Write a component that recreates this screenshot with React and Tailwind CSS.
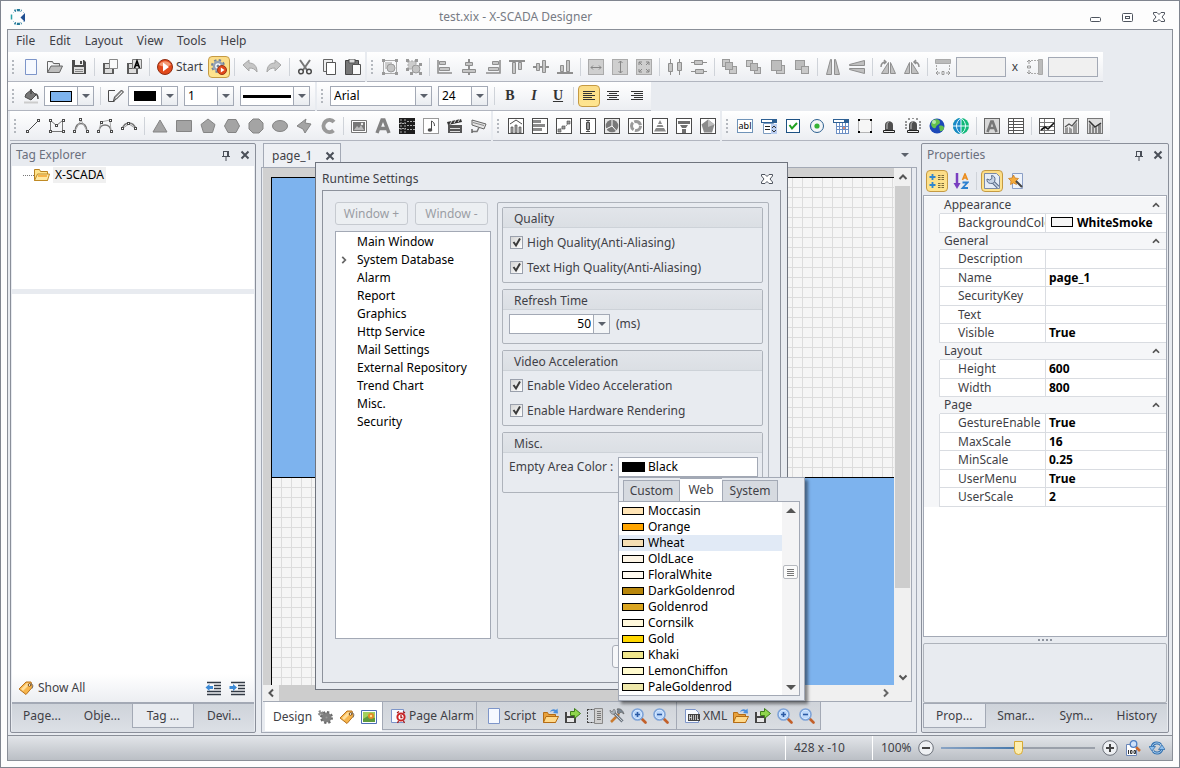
import React, { useState } from "react";

const DARK = "#4b4b4b";
const GRAY = "#8f8f8f";

// Small square handles used by the drawing tools
const Dots = ({ at }) =>
    at.map(([x, y]) => (
        <g key={`${x}-${y}`} shapeRendering="crispEdges">
            <rect x={x - 1} y={y - 1} width="3" height="3" fill={DARK} />
            <rect x={x} y={y} width="1" height="1" fill="#fff" />
        </g>
    ));

const Framed = ({ children, fill = "#fff", stroke = DARK }) => (
    <>
        <rect x=".5" y=".5" width="15" height="15" fill={fill} stroke={stroke} />
        {children}
    </>
);

const Floppy = ({ color = DARK }) => (
    <>
        <path d="M1 1h12l2 2v12H1z" fill={color} />
        <path d="M4 1h8v5H4z" fill="#f2f2f2" />
        <path d="M9 2h2v3H9z" fill={color} />
        <path d="M3 8h10v6H3z" fill="#ddd" />
        <path d="M4 10.500h8M4 12.500h8" stroke="#888" />
    </>
);

const Lens = ({ sign }) => (
    <>
        <path d="M10.500 10.500l4 4" stroke="#c2602a" strokeWidth="2.6" strokeLinecap="round" />
        <circle cx="6.5" cy="6.5" r="5.500" fill="#e4f0ff" stroke="#7da3d8" strokeWidth="1.600" />
        <circle cx="6.5" cy="6.5" r="4" fill="#bcd8fb" />
        <path d={sign === "+" ? "M4 6.500h5M6.500 4v5" : "M4 6.500h5"} stroke="#2c5ba5" strokeWidth="1.600" />
    </>
);

const FolderArrow = () => (
    <>
        <path d="M.500 4.500h4l1 2h7v8H.500z" fill="#e9a13b" stroke="#b46c14" />
        <path d="M3 8.500h12.500l-3 6H.500z" fill="#ffd98a" stroke="#b46c14" />
        <path d="M7 4c1-3 4-3.500 6-2l1.500-1.500.500 5-5-.500 1.500-1.500C10 2.500 8.500 3 7 4z" fill="#4b8fdc" />
    </>
);

const SaveArrow = () => (
    <>
        <path d="M0 4h11v11H0z" fill="#444" />
        <path d="M2 4h6v4H2zM2 10h7v4H2z" fill="#e6e6e6" />
        <path d="M5.500 3.500h4V.500l6 5-6 5V7.500h-4z" fill="#8fd64c" stroke="#3f7f1a" />
    </>
);

const Tag = () => (
    <>
        <path d="M1 9l7-7h5l1.500 5L8 14.500z" fill="#f7b54c" stroke="#b8721d" />
        <path d="M3 9l6-6 3 1-7 7z" fill="#ffdf9c" />
        <circle cx="11.500" cy="5" r="1.300" fill="#fff" stroke="#7a4a12" />
        <path d="M12 4.500c2-2 4 1 2 4" fill="none" stroke="#777" />
    </>
);

const Chip = ({ x, y, s = 7, c = "#c9c9c9" }) => (
    <rect x={x + 0.5} y={y + 0.5} width={s} height={s} fill={c} stroke="#999" />
);

const Bell = () => (
    <>
        <path d="M4 12V7c0-5 8-5 8 0v5z" fill="#4e4e4e" />
        <path d="M6 11V7c0-2 1-3 2-3" fill="none" stroke="#c4c4c4" />
        <path d="M2.500 12.500h11v2h-11z" fill="#eee" stroke="#222" />
    </>
);

const ICONS = {
    logo: (
        <>
            <path d="M4.500 2A7 7 0 0 1 11.500 2M4.500 14A7 7 0 0 0 11.500 14" fill="none" stroke="#247a99" strokeWidth="2.400" strokeDasharray="1.500 1 3 1 2" />
            <path d="M1.500 5.500v5" fill="none" stroke="#2ba3a8" strokeWidth="1.500" />
            <path d="M15 4v9l-4.500-4.500z" fill="#204f92" />
            <path d="M3 4l1-1M3 12l1 1M13 3l1 1M13 13l1-1" stroke="#a9cadc" />
        </>
    ),
    page: <path d="M2.500.500h11v15h-11z" fill="#f6f9ff" stroke="#7d95c9" />,
    open: (
        <>
            <path d="M.500 2.500h5l1 2h6v3" fill="#ddd" stroke="#666" />
            <path d="M.500 13.500V2.500M.500 13.500h12l3-6.500H4z" fill="#bdbdbd" stroke="#666" />
        </>
    ),
    save: <Floppy />,
    saveAll: (
        <>
            <path d="M1 4h11v11H1z" fill="#5a5a5a" />
            <path d="M3 5h4v4H3zM3 10h7v4H3z" fill="#ddd" />
            <path d="M7.500.500h8v9h-8z" fill="#fafafa" stroke="#888" />
        </>
    ),
    saveAs: (
        <>
            <path d="M1 4h11v11H1z" fill="#5a5a5a" />
            <path d="M3 5h3v4H3zM3 10h7v4H3z" fill="#ddd" />
            <path d="M6.500.500h9v9h-9z" fill="#ddd" stroke="#777" />
            <path d="M8.500 9l2.500-7 2.500 7M9.500 6.500h3" fill="none" stroke="#000" strokeWidth="1.600" />
        </>
    ),
    play: (
        <>
            <circle cx="8" cy="8" r="7.500" fill="#e2491b" stroke="#8f2d13" />
            <path d="M2 6c2-5 10-5 12 0-4 2-8 2-12 0z" fill="#f49a74" />
            <path d="M6 3.500l6 4.500-6 4.500z" fill="#fff" />
        </>
    ),
    gear: (
        <>
            <circle cx="7" cy="7" r="6" fill="none" stroke="#72829a" strokeWidth="2" strokeDasharray="2.400 2.310" />
            <circle cx="7" cy="7" r="4" fill="#fff" stroke="#93a1b5" strokeWidth="2.400" />
            <circle cx="7" cy="7" r="1.500" fill="#72829a" />
            <circle cx="11" cy="11" r="4.500" fill="#e2491b" stroke="#9b3418" />
            <path d="M9.800 8.500l3.700 2.500-3.700 2.500z" fill="#fff" />
        </>
    ),
    undo: <path d="M1 6l6-5v3c5 0 8 3 8 9-2-3-4-4-8-4v3z" fill="#c6c6c6" stroke="#a6a6a6" />,
    redo: <path d="M15 6L9 1v3C4 4 1 7 1 13c2-3 4-4 8-4v3z" fill="#c6c6c6" stroke="#a6a6a6" />,
    cut: (
        <>
            <path d="M3 1l7 10M13 1L6 11" stroke="#777" strokeWidth="2" />
            <circle cx="4" cy="12.500" r="2.300" fill="none" stroke={DARK} strokeWidth="1.500" />
            <circle cx="12" cy="12.500" r="2.300" fill="none" stroke={DARK} strokeWidth="1.500" />
        </>
    ),
    copy: (
        <>
            <path d="M2.500.500h9v12h-9z" fill="#eee" stroke="#666" />
            <path d="M5.500 3.500h9v12h-9z" fill="#fff" stroke="#555" />
        </>
    ),
    paste: (
        <>
            <path d="M.500 1.500h13v14H.500z" fill="#777" stroke="#444" />
            <path d="M4 0h6v4H4z" fill="#ddd" stroke="#555" />
            <path d="M7.500 5.500h8v10h-8z" fill="#fafafa" stroke="#555" />
        </>
    ),
    group: (
        <>
            <path d="M1.500 1.500h13v13h-13z" fill="none" stroke="#aaa" />
            <path d="M3 3h7v7H3z" fill="#ccc" />
            <circle cx="9" cy="9" r="4" fill="#c4c4c4" stroke="#999" />
            <path d="M0 0h3v3H0zM13 0h3v3h-3zM0 13h3v3H0zM13 13h3v3h-3z" fill="#999" />
        </>
    ),
    ungroup: (
        <>
            <path d="M2 2h8v8H2z" fill="#ccc" stroke="#aaa" strokeDasharray="2 1" />
            <circle cx="10" cy="10" r="4" fill="#c4c4c4" stroke="#999" />
            <path d="M0 0h3v3H0zM9 0h3v3H9zM0 9h3v3H0zM13 4h3v3h-3zM4 13h3v3H4zM13 13h3v3h-3z" fill="#999" />
        </>
    ),
    alignLeft: (
        <>
            <path d="M1 1v13h14" fill="none" stroke={GRAY} strokeWidth="1.600" />
            <path d="M2.500 2.500h6v3h-6zM2.500 8.500h10v3h-10z" fill="#c6c6c6" stroke={GRAY} />
        </>
    ),
    alignCenter: (
        <>
            <path d="M8 0v16" stroke={GRAY} strokeWidth="2" />
            <path d="M4.500 3.500h7v3h-7zM1.500 10.500h13v3h-13z" fill="#c6c6c6" stroke={GRAY} />
        </>
    ),
    alignRight: (
        <>
            <path d="M15 1v13H1" fill="none" stroke={GRAY} strokeWidth="1.600" />
            <path d="M7.500 2.500h6v3h-6zM3.500 8.500h10v3h-10z" fill="#c6c6c6" stroke={GRAY} />
        </>
    ),
    alignTop: (
        <>
            <path d="M0 2h16" stroke={GRAY} strokeWidth="2" />
            <path d="M3.500 3.500h3v11h-3zM9.500 3.500h3v7h-3z" fill="#c6c6c6" stroke={GRAY} />
        </>
    ),
    alignMiddle: (
        <>
            <path d="M0 8h16" stroke={GRAY} strokeWidth="2" />
            <path d="M3.500 4.500h3v7h-3zM9.500 1.500h3v12h-3z" fill="#c6c6c6" stroke={GRAY} />
        </>
    ),
    alignBottom: (
        <>
            <path d="M0 14h16" stroke={GRAY} strokeWidth="2" />
            <path d="M3.500 6.500h3v6h-3zM9.500 1.500h3v11h-3z" fill="#c6c6c6" stroke={GRAY} />
        </>
    ),
    sameWidth: (
        <Framed fill="#cfcfcf" stroke="#aaa">
            <path d="M3 8.500h10M5 6.500l-2 2 2 2M11 6.500l2 2-2 2" fill="none" stroke="#858585" />
        </Framed>
    ),
    sameHeight: (
        <Framed fill="#cfcfcf" stroke="#aaa">
            <path d="M8.500 2v12M6.500 4l2-2 2 2M6.500 12l2 2 2-2" fill="none" stroke="#858585" />
        </Framed>
    ),
    sameSize: (
        <Framed fill="#cfcfcf" stroke="#aaa">
            <path d="M3 6V3h3M10 3h3v3M3 10v3h3M13 10v3h-3M3 3l3 3M13 3l-3 3M3 13l3-3M13 13l-3-3" fill="none" stroke="#858585" />
        </Framed>
    ),
    spaceH: (
        <>
            <path d="M3.500 0v16M12.500 0v16" stroke={GRAY} />
            <path d="M1.500 4.500h4v8h-4zM10.500 3.500h4v8h-4z" fill="#c6c6c6" stroke={GRAY} />
        </>
    ),
    spaceV: (
        <>
            <path d="M0 3.500h16M0 12.500h16" stroke={GRAY} />
            <path d="M3.500 1.500h8v4h-8zM4.500 10.500h8v4h-8z" fill="#c6c6c6" stroke={GRAY} />
        </>
    ),
    front: (<><Chip x={0} y={0} /><Chip x={7} y={7} /><Chip x={3} y={3} c="#bdbdbd" /></>),
    forward: (<><Chip x={0} y={1} s={6} /><Chip x={8} y={8} s={6} /><Chip x={4} y={4} s={7} c="#bdbdbd" /></>),
    backward: (<><Chip x={6} y={6} s={8} /><Chip x={1} y={1} s={10} c="#bdbdbd" /></>),
    back: (<><Chip x={1} y={1} s={9} c="#bdbdbd" /><Chip x={7} y={7} /></>),
    flipH: <path d="M5.500.500h1v15H1.500zM9.500.500h1l4 15h-5z" fill="#c0c0c0" stroke={GRAY} />,
    flipV: <path d="M15.500 1.500v5H.500v-1zM15.500 14.500v-5H.500v1z" fill="#c0c0c0" stroke={GRAY} />,
    rotateL: (
        <>
            <path d="M8.500 3.500v11h-7zM10.500 3.500l5 11h-5z" fill="#c0c0c0" stroke={GRAY} />
            <path d="M1 8c0-4 2-5 5-5M4 1l2 2-2 2" fill="none" stroke={GRAY} strokeWidth="1.500" />
        </>
    ),
    rotateR: (
        <>
            <path d="M5.500 3.500v11h-5zM7.500 3.500l7 11h-7z" fill="#c0c0c0" stroke={GRAY} />
            <path d="M15 8c0-4-2-5-5-5M12 1l-2 2 2 2" fill="none" stroke={GRAY} strokeWidth="1.500" />
        </>
    ),
    pageWidth: (
        <>
            <path d="M.500.500h15v4H.500z" fill="#bbb" stroke="#aaa" />
            <path d="M1.500 6v6M14.500 6v6" stroke="#aaa" strokeDasharray="2 1" />
            <path d="M1 14h4M11 14h4M3 12l-2 2 2 2M13 12l2 2-2 2M7 12.500h2v3H7z" fill="none" stroke="#999" />
        </>
    ),
    pageHeight: (
        <>
            <path d="M11.500.500h4v15h-4z" fill="#bbb" stroke="#aaa" />
            <path d="M4 1.500h7M4 14.500h7" stroke="#aaa" strokeDasharray="2 1" />
            <path d="M2 1v4M2 11v4M0 3l2-2 2 2M0 13l2 2 2-2M.500 7h3v2H.500z" fill="none" stroke="#999" />
        </>
    ),
    bucket: (
        <>
            <path d="M3 6l5-4 5 5-5 5-6-3z" fill="#777" stroke={DARK} />
            <path d="M8 1v5M12 6c3 0 3 3 3 5" fill="none" stroke={DARK} strokeWidth="1.500" />
            <path d="M1 14.500h14" stroke="#ccc" strokeWidth="2" />
        </>
    ),
    pencil: (
        <>
            <path d="M7 2.500H.500v11h6" fill="none" stroke={DARK} />
            <path d="M5.500 13l1-4 7-7 2 2-7 7z" fill="#aaa" stroke={DARK} />
            <path d="M8 10l6-6" stroke="#eee" />
        </>
    ),
    left: <path d="M2 3.500h12M2 5.500h9M2 7.500h12M2 9.500h9M2 11.500h12" stroke="#333" />,
    center: <path d="M2 3.500h12M4 5.500h8M2 7.500h12M4 9.500h8M2 11.500h12" stroke="#333" />,
    right: <path d="M2 3.500h12M5 5.500h9M2 7.500h12M5 9.500h9M2 11.500h12" stroke="#333" />,
    line: (<><path d="M2 14L14 2" stroke={DARK} /><Dots at={[[2, 13], [13, 2]]} /></>),
    polyline: (<><path d="M1.500 13.500v-11l6 5 6-5v11z" fill="none" stroke="#777" /><Dots at={[[1, 2], [7, 7], [14, 2], [1, 13], [14, 13]]} /></>),
    bezier: (<><path d="M2 13C3 3 13 3 14 13" fill="none" stroke="#777" strokeWidth="1.400" /><path d="M2 13L8 2l6 11" fill="none" stroke="#aaa" /><Dots at={[[7, 1], [1, 13], [14, 13]]} /></>),
    curve: (<><path d="M2 13C3 5 13 5 14 13" fill="none" stroke="#777" strokeWidth="1.400" /><path d="M2 13l2-9 9-2 1 11" fill="none" stroke="#aaa" /><Dots at={[[4, 4], [13, 2], [1, 13], [14, 13]]} /></>),
    arc: (<><path d="M1 11C4 3 12 3 15 11" fill="none" stroke="#777" strokeWidth="1.400" /><path d="M2 10l6-4 6 4" fill="none" stroke="#999" /><Dots at={[[1, 10], [7, 5], [14, 10]]} /></>),
    triangle: <path d="M8 2l7 12H1z" fill="#a4a4a4" stroke="#848484" />,
    rect: <path d="M.500 2.500h15v11H.500z" fill="#a4a4a4" stroke="#848484" />,
    pentagon: <path d="M8 1l7 5.500-2.500 8h-9L1 6.500z" fill="#a4a4a4" stroke="#848484" />,
    hexagon: <path d="M4 1.500h8l3.500 6.500-3.500 6.500H4L.500 8z" fill="#a4a4a4" stroke="#848484" />,
    octagon: <path d="M5 1h6l4 4v6l-4 4H5l-4-4V5z" fill="#a4a4a4" stroke="#848484" />,
    ellipse: <ellipse cx="8" cy="8" rx="7.500" ry="5.500" fill="#a4a4a4" stroke="#848484" />,
    poly: <path d="M1 8l9-7-1 4 6 1-6 9-2-4z" fill="#a4a4a4" stroke="#848484" />,
    arcShape: <path d="M14 4A6 6 0 1 0 13.500 12.500" fill="none" stroke="#999" strokeWidth="4" />,
    picture: (
        <>
            <path d="M.500 2.500h15v12H.500z" fill="#fff" stroke="#777" />
            <path d="M2 4h12v9H2z" fill="#777" />
            <path d="M3 12l3-4 2 2 2-3 3 5z" fill="#bbb" />
            <circle cx="11" cy="6" r="1.200" fill="#eee" />
        </>
    ),
    letterA: <path d="M2 15L7 2h2l5 13M4 10.500h8" fill="none" stroke="#828282" strokeWidth="3.400" />,
    qr: (
        <>
            <path d="M0 0h16v16H0z" fill="#1d1d1d" />
            <path d="M2 1v14M6 1v14M8 3.500h8M8 7.500h8M8 11.500h8M0 5.500h7M0 10.500h7" stroke="#aaa" strokeDasharray="2 1" />
        </>
    ),
    sound: (
        <Framed stroke="#999">
            <path d="M8.500 12V3c2 1 3 2 3 5" fill="none" stroke={DARK} />
            <ellipse cx="7" cy="12" rx="2.300" ry="1.700" fill={DARK} />
        </Framed>
    ),
    clapper: (
        <>
            <path d="M1 7h14v8H1z" fill="#555" />
            <path d="M0 4l14-3 1 3L1 7z" fill="#333" />
            <path d="M3 6l2-3M7 5l2-3M11 4l2-3M3 10.500h10M3 13.500h10" stroke="#ddd" />
        </>
    ),
    camera: (
        <>
            <path d="M1 2l14 4-2 5L1 7z" fill="#e5e5e5" stroke="#666" />
            <path d="M2 4.500l11 3" stroke="#888" />
            <path d="M1 13.500h5l2-4" fill="none" stroke="#777" strokeWidth="1.500" />
            <path d="M1 11v4" stroke="#666" strokeWidth="1.500" />
        </>
    ),
    chartBar: (
        <Framed>
            <path d="M2 6l6-4 6 4" fill="none" stroke={DARK} />
            <path d="M3 9h2v6H3zM7 7h2v8H7zM11 9h2v6h-2z" fill="#aaa" stroke={DARK} strokeWidth=".7" />
        </Framed>
    ),
    chartH: <Framed><path d="M1 3.500h8M1 7.500h12M1 11.500h9" stroke="#8a8a8a" strokeWidth="3" /></Framed>,
    scatter: <Framed><path d="M3 12l4-3 3-1 3-4" fill="none" stroke={DARK} strokeDasharray="1 1" /><path d="M2 11h3v3H2zM6 8h3v3H6zM11 3h3v3h-3z" fill="#999" stroke={DARK} strokeWidth=".6" /></Framed>,
    candle: <Framed><path d="M8 2v12M6 2.500h4M6 13.500h4" stroke={DARK} /><path d="M6.500 4.500h3v7h-3z" fill="#999" stroke={DARK} /></Framed>,
    pie: <Framed fill="#e9e9e9"><circle cx="8" cy="8" r="6.300" fill="#787878" /><path d="M8 1.500V8l4.500 5M8 8l-6 3" stroke="#fff" fill="none" /></Framed>,
    donut: <Framed><circle cx="8" cy="8" r="4.500" fill="none" stroke="#999" strokeWidth="3" strokeDasharray="8 1.400" /></Framed>,
    pyramid: <Framed><path d="M8 2l2 4H6zM5.500 7h5l1 2h-7zM4 10h8l2 3.500H2z" fill="#8a8a8a" /></Framed>,
    funnel: <Framed><path d="M2 3h12v3H2zM4 7h8l-2 3H6zM6 11h4v4H6z" fill="#6f6f6f" /></Framed>,
    radar: <Framed><path d="M8 1.500l6.500 5-2.500 8H4l-2.500-8z" fill="#8b8b8b" /><path d="M8 1.500l6.500 5L8 9z" fill="#bdbdbd" /></Framed>,
    combo: (
        <>
            <path d="M0 1h16v4H0z" fill="#2d5f93" />
            <path d="M1 2h10v2H1z" fill="#fff" />
            <path d="M2.500 5.500h10v10h-10z" fill="#fff" stroke="#7c9cc0" />
            <path d="M4 8.500h5M4 11.500h5" stroke="#222" />
            <path d="M10 6h6v10h-6z" fill="#b9cdf0" />
            <path d="M11 10l2-2 2 2M11 12l2 2 2-2" stroke="#333" fill="none" />
        </>
    ),
    check: <><rect x="1.500" y="1.500" width="13" height="13" fill="#fff" stroke="#1d5183" /><path d="M4.500 7l2.500 3.500 5-5.500" fill="none" stroke="#21a121" strokeWidth="2" /></>,
    radio: <><circle cx="8" cy="8" r="6.500" fill="#f4f6f8" stroke="#2c6090" /><circle cx="8" cy="8" r="2.600" fill="#36b336" /></>,
    calendar: (
        <>
            <path d="M0 1h16v4H0z" fill="#2d5f93" />
            <path d="M1 2h10v2H1z" fill="#fff" />
            <path d="M3 5h12v10H3z" fill="#fff" />
            <path d="M3.500 5v10.500M6.500 5v10M9.500 5v10M12.500 5v10M15.500 5v10M3 8.500h13M3 11.500h13M3 15.500h13" stroke="#6c8fc4" />
            <path d="M10 9h2v2h-2z" fill="#e98a6a" />
        </>
    ),
    panel: (
        <>
            <rect x="1.500" y="1.500" width="13" height="13" fill="#f6f6f6" stroke="#777" strokeDasharray="1 1" />
            <path d="M1 1h2v2H1zM13 1h2v2h-2zM1 13h2v2H1zM13 13h2v2h-2z" fill="#000" />
        </>
    ),
    bell: <Bell />,
    bellRing: (
        <>
            <Bell />
            <path d="M3 1h2M7 0h2M11 1h2M0 4h2M14 4h2M0 7h2M14 7h2M0 10h2M14 10h2" stroke="#333" strokeWidth="1.200" />
        </>
    ),
    earth: (
        <>
            <circle cx="8" cy="8" r="7.500" fill="#1c48b8" />
            <path d="M3 3c3-3 8-2 8 1s-3 2-4 5-5 0-5-3zM10 8c3-1 5 0 5 2s-3 4-4 3z" fill="#63c04c" />
            <circle cx="5" cy="4" r="2" fill="#c9f0c4" opacity=".8" />
        </>
    ),
    globe: (
        <>
            <circle cx="8" cy="8" r="8" fill="#10b878" />
            <path d="M8 0a8 8 0 0 0 0 16z" fill="#1887c9" />
            <path d="M8 0v16M0 8h16M8 0C2 4 2 12 8 16M8 0c6 4 6 12 0 16" fill="none" stroke="#e8fbff" />
        </>
    ),
    textBox: <Framed fill="#d8d8d8" stroke="#666"><path d="M3.500 14L7.300 3.500h1.400l3.800 10.500M5 10h6" fill="none" stroke="#777" strokeWidth="2.600" /></Framed>,
    table: <Framed stroke="#555"><path d="M1 3.500h14M1 6.500h14M1 9.500h14M1 12.500h14M5.500 1v14" stroke="#555" /></Framed>,
    trendGrid: <Framed stroke="#555"><path d="M1 4.500h14M1 8.500h14M1 12.500h14M5.500 1v14" stroke="#777" /><path d="M2 12l4-3 3 2 6-6" fill="none" stroke="#111" strokeWidth="1.600" /></Framed>,
    trend: <Framed fill="#ececec" stroke="#777"><path d="M2 15V10l3-1v6zM6 15V9l3 2v4zM10 15V8l4-4v11z" fill="#999" /><path d="M2 9l4-3 3 2 5-6" fill="none" stroke="#555" strokeWidth="1.300" /></Framed>,
    trendDown: <Framed fill="#ddd" stroke="#777"><path d="M2 5l2 2v8H2zM5 8l2 1v6H5zM8 10l2-1v6H8zM11 7l3-1v9h-3z" fill="#888" /><path d="M2 3l6 6 6-4" fill="none" stroke="#333" strokeWidth="1.500" /></Framed>,
    folder: (
        <>
            <path d="M.500 2.500h5l1 2h7v9H.500z" fill="#ffe48c" stroke="#b9821f" />
            <path d="M.500 13.500l3-6.500h12l-2 6.500z" fill="#ffe9a3" stroke="#c08a25" />
            <path d="M4 9h9" stroke="#f7b54a" strokeWidth="2" />
        </>
    ),
    tag: <Tag />,
    outdent: (
        <>
            <path d="M2 2.500h14M9 5.500h7M9 8.500h7M2 11.500h14M2 14.500h14" stroke="#333b46" strokeWidth="1.300" />
            <path d="M.500 7.500l4-3.500v2h3.500v3H4.500v2z" fill="#3c8ad6" />
        </>
    ),
    indent: (
        <>
            <path d="M2 2.500h14M9 5.500h7M9 8.500h7M2 11.500h14M2 14.500h14" stroke="#333b46" strokeWidth="1.300" />
            <path d="M8 7.500L4 4v2H.500v3H4v2z" fill="#3c8ad6" />
        </>
    ),
    gearGray: (
        <>
            <circle cx="9.500" cy="8.500" r="3" fill="#999" stroke="#808080" strokeWidth="4" />
            <circle cx="9.500" cy="8.500" r="5.500" fill="none" stroke="#6b6b6b" strokeWidth="2" strokeDasharray="2.300 2" />
            <circle cx="3.500" cy="4" r="1.500" fill="#999" stroke="#888" strokeDasharray="1.500 1" strokeWidth="2.500" />
        </>
    ),
    image: (
        <>
            <path d="M.500 1.500h15v13H.500z" fill="#fff" stroke="#4e6fb5" />
            <path d="M2 3h12v10H2z" fill="#a3cf5c" />
            <path d="M2 10l5-3 7 2v4H2z" fill="#5f9b3c" />
            <circle cx="10" cy="7" r="3" fill="#e28a28" />
            <circle cx="10" cy="7" r="1.200" fill="#ffe28a" />
        </>
    ),
    alarm: (
        <>
            <path d="M.500 1.500h12v13H.500z" fill="#f8fbff" stroke="#7d95c9" />
            <circle cx="10" cy="9" r="3.600" fill="#fff" stroke="#cc2424" strokeWidth="2" />
            <path d="M10 7v2.500h1.500M6 5l2-1.500M14 5l-2-1.500M7.500 13l-1 2M12.500 13l1 2" stroke="#a51818" strokeWidth="1.300" fill="none" />
        </>
    ),
    folderArrow: <FolderArrow />,
    saveArrow: <SaveArrow />,
    snippet: (
        <>
            <path d="M.500 1v14M.500 1.500h8M.500 14.500h8" stroke="#444" strokeDasharray="2 1" fill="none" />
            <path d="M7.500.500h8v15h-8z" fill="#cfcfcf" stroke="#888" />
            <path d="M10 3.500h4M10 5.500h4M10 7.500h4M10 9.500h4M10 11.500h4" stroke="#777" />
        </>
    ),
    tools: (
        <>
            <path d="M2 14l8-8" stroke="#c97b2f" strokeWidth="2.500" />
            <path d="M5 5l8.500 8.500" stroke="#6e7780" strokeWidth="3" />
            <path d="M5 5l8.500 8.500" stroke="#c9d0d6" />
            <path d="M8 1c3-1 6 1 7 5l-3-2-2 2-2-2 1-1z" fill="#7b8792" stroke="#555" strokeWidth=".6" />
            <path d="M1 2l2 2 2-3c2 2 2 4 0 5S1 5 1 2z" fill="#aab3bb" stroke="#666" strokeWidth=".6" />
        </>
    ),
    zoomIn: <Lens sign="+" />,
    zoomOut: <Lens sign="-" />,
    xml: (
        <>
            <path d="M.500 1.500h10l3 3v10H.500z" fill="#f8fbff" stroke="#7d95c9" />
            <path d="M3 6h12v7H3z" fill="#444" />
            <path d="M4.500 7v5M6.500 7v5M8.500 7v5M10.500 7v5M12.500 7v5M12 11.500h2M4 9.500h3" stroke="#ddd" strokeWidth=".8" />
        </>
    ),
    categorized: (
        <>
            <path d="M3.500 1v6M.500 4h6M3.500 9v6M.500 12h6" stroke="#2e86d0" strokeWidth="1.800" />
            <path d="M9 2.500h6M9 4.500h6M9 6.500h6M9 10.500h6M9 12.500h6M9 14.500h6" stroke="#7a6a3a" strokeDasharray="2.500 1" />
        </>
    ),
    sort: (
        <>
            <path d="M4 0v11" stroke="#7a3fc0" strokeWidth="2.500" />
            <path d="M.500 10h7L4 16z" fill="#7a3fc0" />
            <path d="M9.500 7L12 1l2.500 6M10.500 5h3" fill="none" stroke="#ea8b1a" strokeWidth="1.600" />
            <path d="M9.500 9.500h5l-5 5.500h5.500" fill="none" stroke="#2a7fd0" strokeWidth="1.800" />
        </>
    ),
    wrench: (
        <>
            <path d="M.500.500h12l3 3v12H.500z" fill="#e6edf7" stroke="#7d8ba6" />
            <path d="M8.500 8.500L14 14" stroke="#5a6c88" strokeWidth="3.600" />
            <path d="M8.500 8.500L14 14" stroke="#c8d4e6" strokeWidth="1.400" />
            <path d="M3 6a4 4 0 1 0 4.500-3.500L8 5.500 5.500 7z" fill="#c8d4e6" stroke="#5a6c88" />
        </>
    ),
    wizard: (
        <>
            <path d="M4.500.500h10v15h-10z" fill="#eef3fb" stroke="#8b9fc6" />
            <path d="M5.500 2L7 5l3.500.500L8 8l.500 3.500-3-1.500-3 1.500L3 8 .500 5.500 4 5z" fill="#f5ab3c" stroke="#c57718" strokeWidth=".7" />
            <path d="M8 8l6 6" stroke="#444" strokeWidth="2" />
        </>
    ),
    zoom100: (
        <>
            <path d="M1.500 4.500h10v11h-10z" fill="#fff" stroke="#6b86b8" />
            <path d="M3.500 10v4M5.500 10.500h1.500v3H5.500zM9 10.500h1.500v3H9z" fill="none" stroke="#333" />
            <path d="M11 7l4 4" stroke="#cf6b2d" strokeWidth="2.500" />
            <circle cx="8.500" cy="4" r="3.300" fill="#cfe2fb" stroke="#4d7fc4" strokeWidth="1.300" />
        </>
    ),
    refresh: (
        <>
            <path d="M3 7C4 2 10 2 12 5M13 9c-1 5-7 5-9 2" fill="none" stroke="#3572b0" strokeWidth="3" />
            <path d="M3 7C4 2 10 2 12 5M13 9c-1 5-7 5-9 2" fill="none" stroke="#a9cff0" />
            <path d="M0 6.500h6.500L3 11zM9.500 9.500H16L13 5z" fill="#8fc0ee" stroke="#3572b0" strokeWidth=".8" />
        </>
    ),
    pin: <path d="M5.500 4v5M10.500 4v5M5 4.500h6M9.500 4v5M4 9.500h8M8 10v4" stroke="#4a4f58" fill="none" />,
    cross: <path d="M4.500 4.500l7 7M11.500 4.500l-7 7" stroke="#4a4f58" strokeWidth="2" />,
    hollowCross: (
        <path
            d="M2.500 3.500h3.500l2 2 2-2h3.500v1.500L11 8l2.500 3v1.500H10l-2-2-2 2H2.500V11L5 8 2.500 5z"
            fill="#fff"
            stroke="#4f555f"
        />
    ),
    minimize: <rect x="3.500" y="8.500" width="10" height="4" rx="1" fill="#fff" stroke="#4f555f" />,
    maximize: (
        <>
            <rect x="3.500" y="4.500" width="10" height="8" rx="1" fill="#fff" stroke="#4f555f" />
            <rect x="6.500" y="7.500" width="4" height="2" fill="#fff" stroke="#4f555f" />
        </>
    ),
    caret: <path d="M4 6h8l-4 4z" fill="#5b616b" />,
    caretUp: <path d="M3 11h10L8 6z" fill="#555" />,
    caretDown: <path d="M3 6h10l-5 5z" fill="#555" />,
    chevUp: <path d="M4.500 10L8 6.500 11.500 10" fill="none" stroke="#555" strokeWidth="2" />,
    chevDown: <path d="M4.500 6.500L8 10l3.500-3.500" fill="none" stroke="#555" strokeWidth="2" />,
    chevLeft: <path d="M10 4.500L6.500 8l3.500 3.500" fill="none" stroke="#555" strokeWidth="2" />,
    chevRight: <path d="M6 4.500L9.500 8 6 11.500" fill="none" stroke="#666" strokeWidth="2" />,
    minus: (
        <>
            <circle cx="8" cy="8" r="7.300" fill="#eef0f3" stroke="#6b7079" />
            <path d="M4 8h8" stroke="#444" strokeWidth="2" />
        </>
    ),
    plus: (
        <>
            <circle cx="8" cy="8" r="7.300" fill="#eef0f3" stroke="#6b7079" />
            <path d="M4 8h8M8 4v8" stroke="#444" strokeWidth="2" />
        </>
    ),
};

function Icon({ name, className = "h-4 w-4" }) {
    return (
        <svg viewBox="0 0 16 16" className={`shrink-0 ${className}`} aria-hidden="true">
            {ICONS[name]}
        </svg>
    );
}

function Tool({ name, active, children }) {
    return (
        <button
            aria-label={name}
            className={`mx-px flex h-[22px] w-[22px] shrink-0 items-center justify-center rounded-sm ${
                active ? "border border-[#c59a43] bg-linear-to-b from-[#fbdc87] to-[#ffe58f]" : ""
            }`}
        >
            {children || <Icon name={name} />}
        </button>
    );
}

// "|" in the list stands for a separator
function Tools({ names }) {
    return names.split(" ").map((name, i) => (name === "|" ? <Sep key={i} /> : <Tool key={i} name={name} />));
}

function TabTools({ names }) {
    return names.split(" ").map((name) => (
        <button key={name} aria-label={name} className="flex w-[22px] justify-center">
            <Icon name={name} />
        </button>
    ));
}

function Sep() {
    return (
        <div className="flex w-[7px] shrink-0 justify-center">
            <div className="h-[18px] w-px bg-[#cfd3d9]"></div>
        </div>
    );
}

function Bar({ children, className = "" }) {
    return (
        <div className={`flex items-center border-b border-[#b1b5bf] bg-linear-to-b from-white to-[#eceef2] ${className}`}>
            <div className="flex w-[11px] shrink-0 flex-col items-center gap-[2px] pr-[2px]">
                <i className="h-[2px] w-[2px] bg-[#b4b8be]"></i>
                <i className="h-[2px] w-[2px] bg-[#b4b8be]"></i>
                <i className="h-[2px] w-[2px] bg-[#b4b8be]"></i>
                <i className="h-[2px] w-[2px] bg-[#b4b8be]"></i>
            </div>
            {children}
        </div>
    );
}

function Combo({ label, value, className, children }) {
    return (
        <div className={`relative h-5 shrink-0 border border-[#a3a9b5] bg-white ${className}`}>
            <select
                aria-label={label}
                defaultValue={value}
                className={`block h-full w-full appearance-none bg-transparent pl-[3px] text-black outline-none ${children ? "opacity-0" : ""}`}
            >
                <option>{value}</option>
            </select>
            {children && <div className="pointer-events-none absolute inset-y-0 left-0 right-4 flex items-center justify-center">{children}</div>}
            <div className="pointer-events-none absolute inset-y-0 right-0 flex w-4 items-center justify-center border-l border-[#a3a9b5] bg-linear-to-b from-white to-[#e9ecf0]">
                <Icon name="caret" />
            </div>
        </div>
    );
}

function PanelTabs({ tabs, active }) {
    return (
        <div className="flex h-[29px] shrink-0 border-t border-[#a3a9b5] bg-linear-to-b from-[#ced3da] to-[#dce0e6]">
            {tabs.map((tab) => (
                <button
                    key={tab}
                    className={`h-6 flex-1 ${tab === active ? "border border-t-0 border-[#a3a9b5] bg-[#e8ebf0]" : ""}`}
                >
                    {tab}
                </button>
            ))}
        </div>
    );
}

function PanelHeader({ title }) {
    return (
        <div className="flex h-[22px] shrink-0 items-center pl-1 pr-px text-[#6a6f7d]">
            <h2 className="flex-1">{title}</h2>
            <button aria-label="Auto hide"><Icon name="pin" /></button>
            <button aria-label="Close" className="ml-[3px]"><Icon name="cross" /></button>
        </div>
    );
}

function GroupBox({ title, children }) {
    return (
        <fieldset className="rounded-[2px] border border-[#aeb3bb]">
            <h3 className="h-5 border-b border-[#cdd2d8] bg-linear-to-b from-[#e2e5ea] to-[#dbdfe4] pl-[11px] leading-[22px]">{title}</h3>
            {children}
        </fieldset>
    );
}

function Check({ label }) {
    const [on, setOn] = useState(true);
    return (
        <label className="flex h-[25px] items-center gap-1 pl-[7px]">
            <span className="relative h-[13px] w-[13px]">
                <input
                    type="checkbox"
                    checked={on}
                    onChange={() => setOn(!on)}
                    className="block h-[13px] w-[13px] appearance-none border border-[#9aa0ac] bg-linear-to-br from-[#d5d5d5] to-white"
                />
                {on && (
                    <svg viewBox="0 0 13 13" className="pointer-events-none absolute inset-0 h-[13px] w-[13px]">
                        <path d="M3.500 6l2.500 3.500 4-7" fill="none" stroke="#3a3a3a" strokeWidth="2" />
                    </svg>
                )}
            </span>
            {label}
        </label>
    );
}

const SETTINGS = [
    "Main Window", "System Database", "Alarm", "Report", "Graphics", "Http Service",
    "Mail Settings", "External Repository", "Trend Chart", "Misc.", "Security",
];

const COLORS = [
    ["Moccasin", "#ffe4b5"],
    ["Orange", "#ffa500"],
    ["Wheat", "#f5deb3"],
    ["OldLace", "#fdf5e6"],
    ["FloralWhite", "#fffaf0"],
    ["DarkGoldenrod", "#b8860b"],
    ["Goldenrod", "#daa520"],
    ["Cornsilk", "#fff8dc"],
    ["Gold", "#ffd700"],
    ["Khaki", "#f0e68c"],
    ["LemonChiffon", "#fffacd"],
    ["PaleGoldenrod", "#eee8aa"],
];

function ColorPopup() {
    return (
        <div className="absolute -left-px top-full mt-px w-[187px] border border-[#a3a9b5] bg-[#e8ebf0] pb-1 pr-1 shadow-[3px_3px_3px_rgba(0,0,0,0.45)]">
            <div className="flex h-[23px] items-end pl-1 text-[#3f3f46]">
                <button className="h-[21px] w-[57px] border border-b-0 border-[#a3a9b5] bg-[#d6dae0]">Custom</button>
                <button className="h-[23px] w-[42px] border-t border-[#a3a9b5] bg-white">Web</button>
                <button className="h-[21px] w-[56px] border border-b-0 border-[#a3a9b5] bg-[#d6dae0]">System</button>
            </div>
            <div className="flex border border-l-0 border-[#a3a9b5] bg-white">
                <ul className="flex-1 pt-px text-black">
                    {COLORS.map(([name, color]) => (
                        <li key={name} className={`flex h-4 items-center gap-1 pl-[3px] ${name === "Wheat" ? "bg-[#e1eaf6]" : ""}`}>
                            <span className="h-[8px] w-[22px] border border-black" style={{ background: color }}></span>
                            {name}
                        </li>
                    ))}
                </ul>
                <div className="flex w-[17px] flex-col items-center bg-[#f4f4f5]">
                    <Icon name="caretUp" />
                    <div className="mt-[47px] flex h-[14px] w-[15px] flex-col items-center justify-center gap-px rounded-[2px] border border-[#b5b8be] bg-[#fbfbfb]">
                        <i className="h-px w-[7px] bg-[#777]"></i>
                        <i className="h-px w-[7px] bg-[#777]"></i>
                        <i className="h-px w-[7px] bg-[#777]"></i>
                        <i className="h-px w-[7px] bg-[#777]"></i>
                    </div>
                    <Icon name="caretDown" className="mt-auto h-4 w-4" />
                </div>
            </div>
        </div>
    );
}

function RuntimeSettings() {
    return (
        <div role="dialog" aria-label="Runtime Settings" className="absolute left-[54px] top-[19px] z-10 w-[473px] border border-[#6f747e] bg-[#e8ebf0] px-[6px] pb-[6px]">
            <div className="flex h-[27px] items-center justify-between pr-[6px] pt-1">
                <h2>Runtime Settings</h2>
                <button aria-label="Close dialog"><Icon name="hollowCross" /></button>
            </div>
            <div className="border border-[#8d929c] pb-[14px] pl-3 pr-[11px] pt-[11px]">
                <div className="flex gap-[6px]">
                    <div className="w-[156px] shrink-0">
                        <div className="flex h-[23px] gap-[7px] text-[#9a9da4]">
                            <button className="w-[73px] rounded-[3px] border border-[#c6cad0] bg-[#eceff2]">Window +</button>
                            <button className="w-[73px] rounded-[3px] border border-[#c6cad0] bg-[#eceff2]">Window -</button>
                        </div>
                        <ul className="mt-[6px] h-[408px] border border-[#a3a9b5] bg-white pt-px leading-[18px] text-black">
                            {SETTINGS.map((item) => (
                                <li key={item} className="flex h-[18px] items-center">
                                    <span className="flex w-[21px] items-center">
                                        {item === "System Database" && <Icon name="chevRight" className="h-[14px] w-4" />}
                                    </span>
                                    {item}
                                </li>
                            ))}
                        </ul>
                    </div>
                    <div className="flex flex-1 flex-col gap-[6px] rounded-[2px] border border-[#aeb3bb] p-1 pr-[5px]">
                        <GroupBox title="Quality">
                            <div className="py-[2px]">
                                <Check label="High Quality(Anti-Aliasing)" />
                                <Check label="Text High Quality(Anti-Aliasing)" />
                            </div>
                        </GroupBox>
                        <GroupBox title="Refresh Time">
                            <div className="flex items-center gap-[6px] px-[6px] pb-[9px] pt-1">
                                <div className="flex h-5 w-[101px] border border-[#a3a9b5] bg-white">
                                    <input aria-label="Refresh Time" defaultValue="50" className="w-0 flex-1 pr-[2px] text-right text-black outline-none" />
                                    <button aria-label="Open list" className="flex w-4 items-center justify-center border-l border-[#a3a9b5] bg-[#f3f5f7]">
                                        <Icon name="caret" />
                                    </button>
                                </div>
                                (ms)
                            </div>
                        </GroupBox>
                        <GroupBox title="Video Acceleration">
                            <div className="py-[2px]">
                                <Check label="Enable Video Acceleration" />
                                <Check label="Enable Hardware Rendering" />
                            </div>
                        </GroupBox>
                        <GroupBox title="Misc.">
                            <div className="flex items-center justify-between pb-[15px] pl-[6px] pr-1 pt-1">
                                <label htmlFor="empty-color">Empty Area Color :</label>
                                <div className="relative flex h-5 w-[140px] items-center gap-[3px] border border-[#a3a9b5] bg-white pl-[3px]">
                                    <span className="h-[10px] w-[23px] bg-black"></span>
                                    <input id="empty-color" defaultValue="Black" className="w-0 flex-1 text-black outline-none" />
                                    <ColorPopup />
                                </div>
                            </div>
                        </GroupBox>
                    </div>
                </div>
                <div className="mt-[6px] flex h-[23px] justify-end gap-[7px]">
                    <button aria-label="OK" className="w-[75px] rounded-[3px] border border-[#a9aeb8] bg-[#f6f7f9]"></button>
                    <button aria-label="Cancel" className="w-[75px] rounded-[3px] border border-[#a9aeb8] bg-[#f6f7f9]"></button>
                </div>
            </div>
        </div>
    );
}

const PROPERTIES = {
    Appearance: [["BackgroundColor", "WhiteSmoke"]],
    General: [["Description", ""], ["Name", "page_1"], ["SecurityKey", ""], ["Text", ""], ["Visible", "True"]],
    Layout: [["Height", "600"], ["Width", "800"]],
    Page: [["GestureEnable", "True"], ["MaxScale", "16"], ["MinScale", "0.25"], ["UserMenu", "True"], ["UserScale", "2"]],
};

function PropertyGrid() {
    return (
        <table className="w-full table-fixed border-separate border-spacing-0 leading-4">
            <colgroup>
                <col className="w-4" />
                <col className="w-[106px]" />
                <col />
            </colgroup>
            {Object.entries(PROPERTIES).map(([group, rows]) => (
                <tbody key={group}>
                    <tr className="h-[17px] bg-[#f5f6f8]">
                        <td className="border-b border-[#f5f6f8] p-0"></td>
                        <th colSpan="2" scope="rowgroup" className="border-b border-[#d9dce1] p-0 pl-1 text-left font-normal">
                            <div className="flex items-center justify-between pr-[3px]">
                                {group}
                                <Icon name="chevUp" className="h-[14px] w-[14px]" />
                            </div>
                        </th>
                    </tr>
                    {rows.map(([name, value]) => (
                        <tr key={name} className="odd:h-[18px] even:h-[19px]">
                            <td className="border-r border-[#d9dce1] bg-[#f5f6f8] p-0"></td>
                            <th scope="row" className="overflow-hidden border-b border-r border-[#d9dce1] p-0 pl-[18px] text-left font-normal">{name}</th>
                            <td className="border-b border-[#d9dce1] p-0 pl-[3px] font-bold text-black">
                                {name === "BackgroundColor" && <span className="ml-[2px] mr-1 inline-block h-[10px] w-[22px] border border-black bg-[#f5f5f5]"></span>}
                                {value}
                            </td>
                        </tr>
                    ))}
                </tbody>
            ))}
        </table>
    );
}

const GRID = "bg-[linear-gradient(to_right,transparent_9px,#dcdcdc_9px),linear-gradient(to_bottom,transparent_9px,#dcdcdc_9px)] bg-[size:10px_10px]";
const TAB = "flex h-7 items-center border border-t-0 border-[#a3a9b5] bg-linear-to-b from-[#d0d4da] to-[#d9dde2]";

function Designer() {
    return (
        <section className="relative flex min-w-0 flex-1 flex-col">
            <div className="flex h-6 shrink-0 items-stretch justify-between pl-[2px] pr-1">
                <button className="flex w-[78px] items-center justify-between border border-b-0 border-[#a3a9b5] bg-[#eef0f4] pl-2 pr-[2px]">
                    page_1
                    <Icon name="cross" />
                </button>
                <button aria-label="Open pages"><Icon name="caret" /></button>
            </div>
            <div className="flex flex-1 flex-col border border-[#a3a9b5] pl-px">
                <div className="mr-1 flex flex-1 flex-col border-b border-r border-[#a3a9b5]">
                    <div className="flex flex-1">
                        <div className="flex flex-1 bg-[#d0d0d0] pl-2 pt-[9px]">
                            <div className="grid flex-1 grid-cols-2 grid-rows-[300px_1fr] border-l border-t border-black bg-[#f5f5f5]">
                                <div className="border-b border-black bg-[#7db3ee]"></div>
                                <div className={`border-b border-black ${GRID}`}></div>
                                <div className={GRID}></div>
                                <div className="bg-[#7db3ee]"></div>
                            </div>
                        </div>
                        <div className="flex w-[17px] flex-col items-center bg-[#f0f0f0]">
                            <Icon name="chevUp" className="my-px h-4 w-4" />
                            <div className="h-[402px] w-[15px] bg-[#cdcdcd]"></div>
                            <Icon name="chevDown" className="mt-auto h-4 w-4" />
                        </div>
                    </div>
                    <div className="flex h-4 items-center bg-[#f0f0f0]">
                        <Icon name="chevLeft" />
                        <div className="h-full w-[460px] bg-[#cdcdcd]"></div>
                        <Icon name="chevRight" className="ml-auto mr-[17px] h-4 w-4" />
                    </div>
                </div>
                <div className="flex h-[30px] items-start pl-[2px]">
                    <div className="flex h-[29px] items-center bg-white pl-2 pr-[2px]">
                        <button className="w-[41px] text-left">Design</button>
                        <TabTools names="gearGray tag image" />
                    </div>
                    <div className={`${TAB} pl-2 pr-[2px]`}>
                        <button className="flex items-center gap-[2px]"><Icon name="alarm" />Page Alarm</button>
                    </div>
                    <div className={`${TAB} border-l-0 pl-[9px] pr-1`}>
                        <button className="mr-1 flex items-center gap-[2px]"><Icon name="page" />Script</button>
                        <TabTools names="folderArrow saveArrow snippet tools zoomIn zoomOut" />
                    </div>
                    <div className={`${TAB} border-l-0 pl-2 pr-[2px]`}>
                        <button className="mr-[3px] flex items-center gap-[2px]"><Icon name="xml" />XML</button>
                        <TabTools names="folderArrow saveArrow zoomIn zoomOut" />
                    </div>
                </div>
            </div>
            <RuntimeSettings />
        </section>
    );
}

function Toolbars() {
    return (
        <div className="shrink-0">
            <div className="flex h-[30px] gap-[2px]">
                <Bar>
                    <Tools names="page open save | saveAll saveAs |" />
                    <button className="flex w-[54px] items-center gap-[3px] pl-1"><Icon name="play" />Start</button>
                    <Tool name="gear" active />
                    <Tools names="| undo redo | cut copy paste" />
                </Bar>
                <Bar>
                    <Tools names="group ungroup | alignLeft alignCenter alignRight alignTop alignMiddle alignBottom | sameWidth sameHeight sameSize | spaceH spaceV | front forward backward back | flipH flipV | rotateL rotateR | pageWidth" />
                    <input aria-label="Width" disabled className="mx-px h-5 w-[50px] border border-[#a3a9b5] bg-[#f0f0f0]" />
                    <span className="w-4 text-center">x</span>
                    <Tool name="pageHeight" />
                    <input aria-label="Height" disabled className="ml-px mr-[5px] h-5 w-[50px] border border-[#a3a9b5] bg-[#f0f0f0]" />
                </Bar>
            </div>
            <div className="flex h-[29px] gap-[2px]">
                <Bar className="pr-1">
                    <Tool name="bucket" />
                    <Combo label="Fill color" value="Blue" className="ml-px mr-[3px] w-[50px]">
                        <span className="h-[11px] w-[22px] border border-black bg-[#7db3ee]"></span>
                    </Combo>
                    <Sep />
                    <Tool name="pencil" />
                    <Combo label="Line color" value="Black" className="w-[50px]">
                        <span className="h-[10px] w-[22px] bg-black"></span>
                    </Combo>
                    <Combo label="Line width" value="1" className="ml-[6px] w-[50px]" />
                    <Combo label="Line style" value="Solid" className="ml-[6px] mr-px w-[70px]">
                        <span className="mx-[2px] h-[3px] flex-1 bg-black"></span>
                    </Combo>
                </Bar>
                <Bar className="pr-[2px]">
                    <Combo label="Font" value="Arial" className="ml-[2px] w-[102px]" />
                    <Combo label="Font size" value="24" className="ml-[6px] mr-[3px] w-[50px]" />
                    <Sep />
                    <Tool name="Bold"><b className="font-['Liberation_Serif'] text-sm text-[#333]">B</b></Tool>
                    <Tool name="Italic"><b className="font-['Liberation_Serif'] text-sm italic text-[#333]">I</b></Tool>
                    <Tool name="Underline"><b className="font-['Liberation_Serif'] text-sm text-[#333] underline">U</b></Tool>
                    <Sep />
                    <Tool name="left" active />
                    <Tools names="center right" />
                </Bar>
            </div>
            <div className="flex h-[30px] gap-[2px] pl-[2px]">
                <Bar>
                    <Tools names="line polyline bezier curve arc | triangle rect pentagon hexagon octagon ellipse poly arcShape | picture letterA qr sound clapper camera" />
                </Bar>
                <Bar>
                    <Tools names="chartBar chartH scatter candle pie donut pyramid funnel radar" />
                </Bar>
                <Bar className="pr-[3px]">
                    <Tool name="Text box">
                        <span className="h-[14px] w-4 border border-[#6f93b8] bg-white text-[9px] leading-[11px] text-black">abl</span>
                    </Tool>
                    <Tools names="combo check radio calendar panel bell bellRing earth globe | textBox table | trendGrid trend trendDown" />
                </Bar>
            </div>
        </div>
    );
}

export default function App() {
    const [zoom, setZoom] = useState(50);

    return (
        <div className="flex h-screen flex-col border border-[#80858f] bg-[#fdfdfd] px-[6px] pb-[6px] font-['Noto_Sans',sans-serif] text-xs text-[#3f3f46]">
            <header className="flex h-7 shrink-0 items-center pl-[3px] pr-[6px] pt-1">
                <Icon name="logo" />
                <h1 className="flex-1 text-center text-[#777b84]">test.xix - X-SCADA Designer</h1>
                <div className="flex w-[162px] justify-end gap-4">
                    <button aria-label="Minimize"><Icon name="minimize" /></button>
                    <button aria-label="Maximize"><Icon name="maximize" /></button>
                    <button aria-label="Close window"><Icon name="hollowCross" /></button>
                </div>
            </header>
            <div className="flex min-h-0 flex-1 flex-col border border-[#8a8f98] bg-[#e8ebf0]">
                <nav className="flex h-[22px] shrink-0 items-center gap-[14px] pl-2">
                    {["File", "Edit", "Layout", "View", "Tools", "Help"].map((item) => (
                        <button key={item}>{item}</button>
                    ))}
                </nav>
                <Toolbars />
                <main className="flex min-h-0 flex-1 pb-[2px] pl-[2px] pr-[3px] pt-[2px]">
                    <aside className="mr-[5px] flex w-[246px] shrink-0 flex-col rounded-[2px] border border-[#8a8f9a] px-px">
                        <PanelHeader title="Tag Explorer" />
                        <div className="h-[123px] shrink-0 bg-white pl-[11px]">
                            <div className="flex h-[18px] items-center">
                                <span className="w-[11px] border-t border-dotted border-[#777]"></span>
                                <Icon name="folder" />
                                <span className="ml-[3px] bg-[#f0f0f0] px-[2px] leading-4 text-black">X-SCADA</span>
                            </div>
                        </div>
                        <div className="h-[5px] shrink-0"></div>
                        <div className="flex-1 bg-white"></div>
                        <div className="flex h-[29px] shrink-0 items-center border-b border-[#a3a9b5] bg-linear-to-b from-white to-[#eceef2] pl-[6px] pr-[5px]">
                            <button className="mr-auto flex items-center gap-1"><Icon name="tag" />Show All</button>
                            <Tools names="outdent indent" />
                        </div>
                        <PanelTabs tabs={["Page...", "Obje...", "Tag ...", "Devi..."]} active="Tag ..." />
                    </aside>
                    <Designer />
                    <aside className="ml-1 flex w-[248px] shrink-0 flex-col rounded-[2px] border border-[#8a8f9a] px-px">
                        <PanelHeader title="Properties" />
                        <div className="flex h-[29px] shrink-0 items-center pl-[2px]">
                            <Tool name="categorized" active />
                            <Tool name="sort" />
                            <Sep />
                            <Tool name="wrench" active />
                            <Tool name="wizard" />
                        </div>
                        <div className="flex-1 border border-[#a3a9b5] bg-white pt-px"><PropertyGrid /></div>
                        <div className="flex h-[6px] shrink-0 items-center justify-center gap-[2px]">
                            <i className="h-[2px] w-[2px] bg-[#8e949f]"></i>
                            <i className="h-[2px] w-[2px] bg-[#8e949f]"></i>
                            <i className="h-[2px] w-[2px] bg-[#8e949f]"></i>
                            <i className="h-[2px] w-[2px] bg-[#8e949f]"></i>
                        </div>
                        <div className="h-[60px] shrink-0 rounded-[2px] border border-[#aeb3bb]"></div>
                        <PanelTabs tabs={["Prop...", "Smar...", "Sym...", "History"]} active="Prop..." />
                    </aside>
                </main>
                <footer className="flex h-[25px] shrink-0 items-center justify-end border-t border-[#8a8f98] bg-linear-to-b from-[#e2e5e9] to-[#bbbfc5] pr-[7px]">
                    <div className="flex h-full w-[87px] items-center border-l border-white pl-2">428 x -10</div>
                    <div className="flex h-full w-[46px] items-center border-l border-white pl-2">100%</div>
                    <button aria-label="Zoom out"><Icon name="minus" /></button>
                    <input
                        type="range"
                        aria-label="Zoom"
                        value={zoom}
                        onChange={(e) => setZoom(e.target.value)}
                        className="mx-[7px] h-[14px] w-[154px] appearance-none bg-[linear-gradient(to_right,#8aa4c4,#4577ab_50%,#9aa0aa_50%)] bg-[length:100%_2px] bg-center bg-no-repeat [&::-webkit-slider-thumb]:h-[14px] [&::-webkit-slider-thumb]:w-[9px] [&::-webkit-slider-thumb]:appearance-none [&::-webkit-slider-thumb]:rounded-b-full [&::-webkit-slider-thumb]:border [&::-webkit-slider-thumb]:border-[#d7a933] [&::-webkit-slider-thumb]:bg-[#fdeeb0]"
                    />
                    <button aria-label="Zoom in"><Icon name="plus" /></button>
                    <button aria-label="Zoom 100%" className="ml-[7px]"><Icon name="zoom100" /></button>
                    <button aria-label="Refresh" className="ml-2"><Icon name="refresh" /></button>
                </footer>
            </div>
        </div>
    );
}
